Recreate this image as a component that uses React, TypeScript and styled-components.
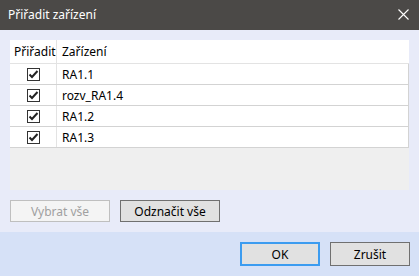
import React from 'react'
import styled, { createGlobalStyle } from 'styled-components'

const Global = createGlobalStyle`
  html, body {
    margin: 0;
    padding: 0;
    background: #e8ebf9;
  }
  * {
    box-sizing: border-box;
  }
`

const Window = styled.div`
  width: 419px;
  height: 276px;
  display: flex;
  flex-direction: column;
  font-family: 'Noto Sans', 'Open Sans', sans-serif;
  font-size: 12px;
  color: #000;
`

const TitleBar = styled.div`
  height: 30px;
  flex: none;
  display: flex;
  align-items: center;
  justify-content: space-between;
  padding: 0 10px 1px 8px;
  background: #4b4947;
  color: #fff;
`

const Body = styled.div`
  flex: 1;
  display: flex;
  flex-direction: column;
  gap: 10px;
  padding: 10px;
  background: #e8ebf9;
`

const Grid = styled.div`
  height: 150px;
  width: 399px;
  background: #efefef;
  display: flex;
  flex-direction: column;
`

const Row = styled.div<{ $header?: boolean }>`
  display: grid;
  grid-template-columns: 47px 1fr;
  height: ${({ $header }) => ($header ? '24px' : '21px')};
  background: #fff;
  border-bottom: 1px solid ${({ $header }) => ($header ? '#e3e3e3' : '#d3d3d3')};
  border-right: ${({ $header }) => ($header ? 'none' : '1px solid #d3d3d3')};
`

const Cell = styled.div<{ $center?: boolean }>`
  display: flex;
  align-items: center;
  justify-content: ${({ $center }) => ($center ? 'center' : 'flex-start')};
  padding-left: ${({ $center }) => ($center ? '0' : '5px')};
  border-right: ${({ $center }) => ($center ? '1px solid #e3e3e3' : 'none')};
  white-space: nowrap;
  overflow: hidden;
`

const HeaderCell = styled(Cell)`
  padding-left: ${({ $center }) => ($center ? '4px' : '5px')};
  justify-content: flex-start;
`

const Box = styled.span`
  width: 13px;
  height: 13px;
  border: 1px solid #333;
  background: #fff;
  display: flex;
  align-items: center;
  justify-content: center;
`

const ButtonRow = styled.div`
  display: flex;
  gap: 10px;
`

const Button = styled.button<{ $focus?: boolean }>`
  height: ${({ $focus }) => ($focus !== undefined ? '24px' : '22px')};
  width: ${({ $focus }) => ($focus !== undefined ? '80px' : '100px')};
  font: inherit;
  color: #000;
  background: #e1e1e1;
  border: ${({ $focus }) => ($focus ? '2px solid #3c9cf0' : '1px solid #707070')};
  padding: 0;
  cursor: default;

  &:disabled {
    color: #a0a0a0;
    background: #f4f4f4;
    border-color: #bfbfbf;
  }
`

const Footer = styled.div`
  height: 44px;
  flex: none;
  display: flex;
  align-items: center;
  justify-content: flex-end;
  gap: 10px;
  padding-right: 9px;
  background: #d6e1f7;
`

const Check = () => (
  <svg width="11" height="11" viewBox="0 0 11 11">
    <path d="M1.5 5.5 L4 8 L9.5 2" stroke="#222" strokeWidth="2" fill="none" />
  </svg>
)

const Close = () => (
  <svg width="11" height="11" viewBox="0 0 11 11">
    <path d="M0.5 0.5 L10.5 10.5 M10.5 0.5 L0.5 10.5" stroke="#fff" strokeWidth="1.1" />
  </svg>
)

const devices = ['RA1.1', 'rozv_RA1.4', 'RA1.2', 'RA1.3']

export default function App() {
  return (
    <Window>
      <Global />
      <TitleBar>
        <span>Přiřadit zařízení</span>
        <Close />
      </TitleBar>
      <Body>
        <Grid>
          <Row $header>
            <HeaderCell $center>Přiřadit</HeaderCell>
            <HeaderCell>Zařízení</HeaderCell>
          </Row>
          {devices.map((d) => (
            <Row key={d}>
              <Cell $center>
                <Box>
                  <Check />
                </Box>
              </Cell>
              <Cell>{d}</Cell>
            </Row>
          ))}
        </Grid>
        <ButtonRow>
          <Button disabled>Vybrat vše</Button>
          <Button>Odznačit vše</Button>
        </ButtonRow>
      </Body>
      <Footer>
        <Button $focus>OK</Button>
        <Button $focus={false}>Zrušit</Button>
      </Footer>
    </Window>
  )
}
